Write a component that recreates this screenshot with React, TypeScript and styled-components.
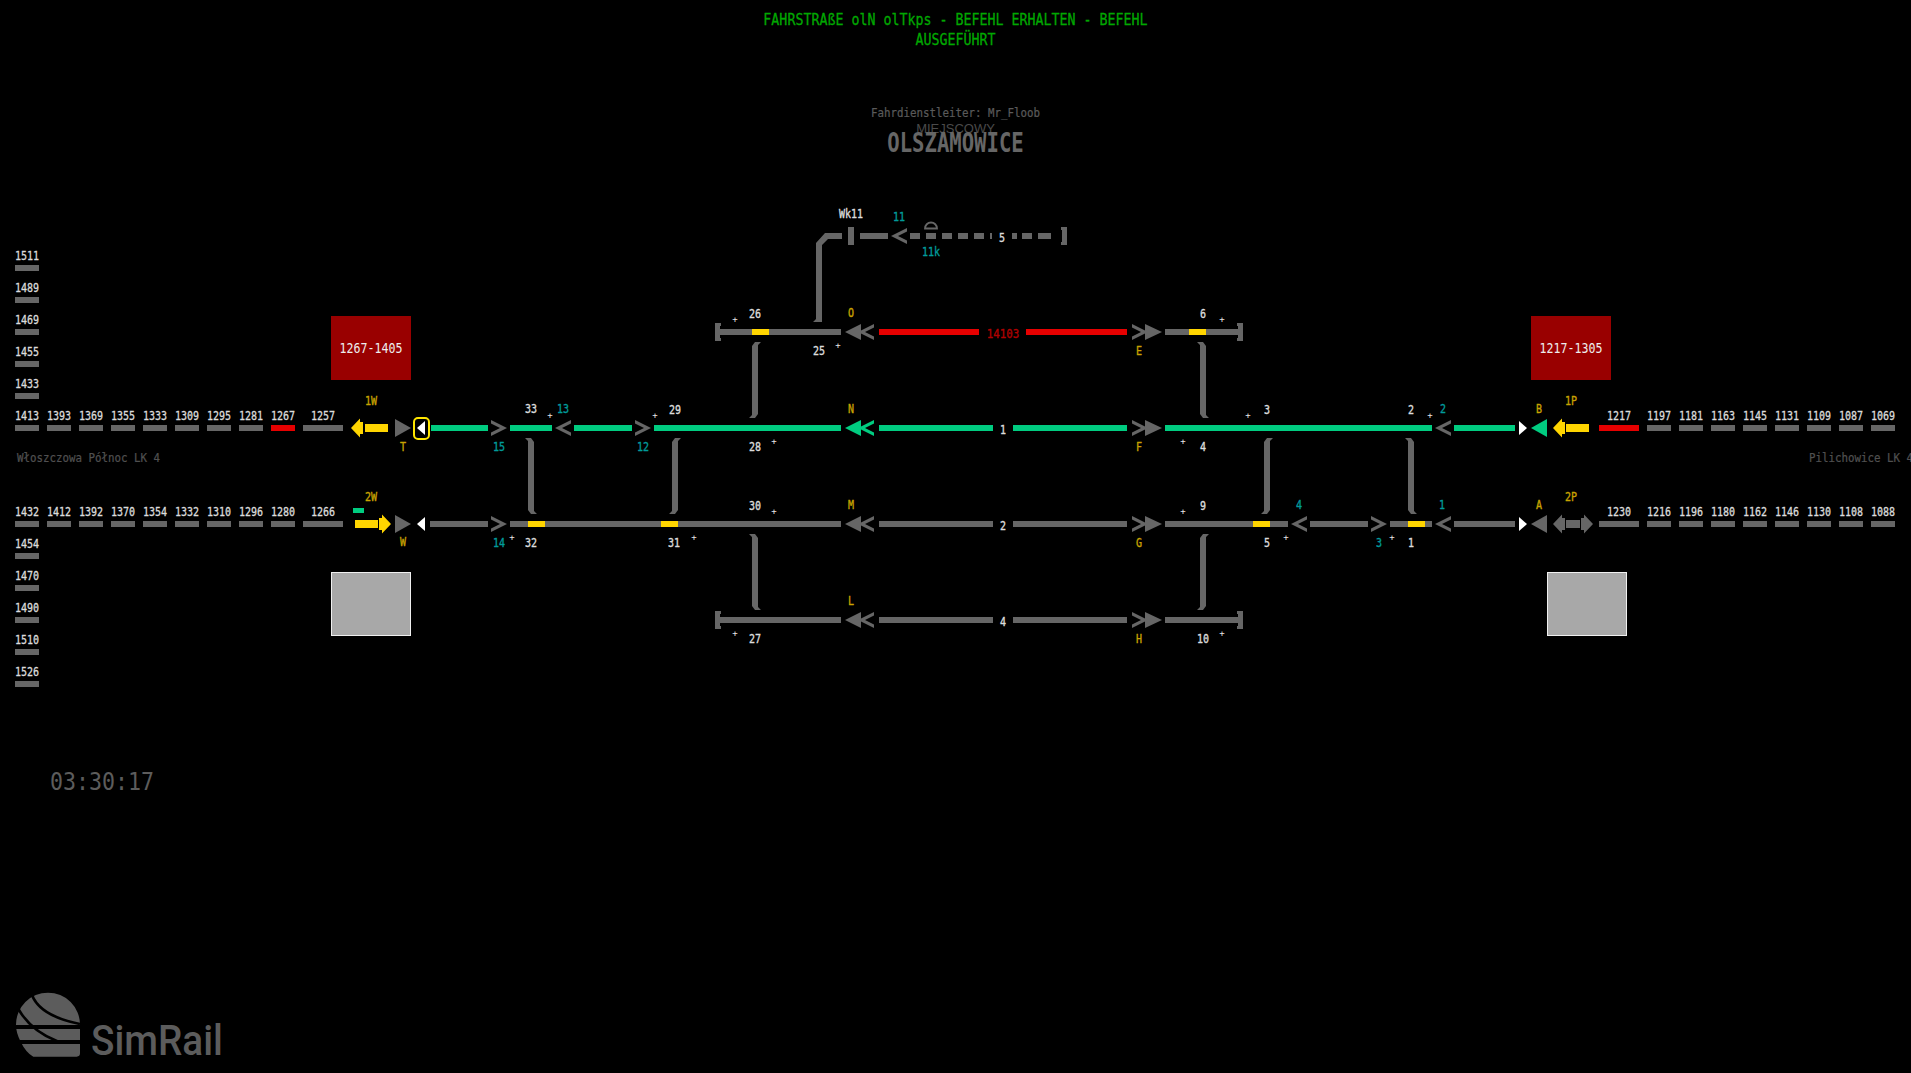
import React from 'react';
import styled, { createGlobalStyle } from 'styled-components';

const GRAY = '#666666';
const GREEN = '#00cc80';
const RED = '#e60000';
const YELLOW = '#ffd500';
const BOARD_TOP = 200;
const MONO = `'DejaVu Sans Mono', 'Liberation Mono', monospace`;

const GlobalStyle = createGlobalStyle`
    html, body {
        margin: 0;
        padding: 0;
        background: #000;
    }
`;

const Page = styled.div`
    position: relative;
    display: flex;
    flex-direction: column;
    width: 1911px;
    height: 1073px;
    overflow: hidden;
    background: #000;
    font-family: ${MONO};
`;

const Header = styled.header`
    display: flex;
    flex-direction: column;
    align-items: center;
    height: ${BOARD_TOP}px;
    padding-top: 13px;
    box-sizing: border-box;
`;

const Message = styled.div`
    width: 400px;
    font-size: 13.3px;
    line-height: 17.4px;
    text-align: center;
    color: #00a800;
    -webkit-text-stroke: 0.25px #00a800;
    transform: scaleY(1.15);
`;

const Dispatcher = styled.div`
    margin-top: 59px;
    font-size: 10.8px;
    line-height: 14px;
    color: #5a5a5a;
    -webkit-text-stroke: 0.2px #5a5a5a;
    transform: scaleY(1.15);
`;

const Mode = styled.div`
    margin-top: 0;
    font-family: 'Liberation Sans', Arial, sans-serif;
    font-size: 13px;
    line-height: 15px;
    color: #4a4a4a;
`;

const Station = styled.div`
    margin-top: -5px;
    font-size: 20.6px;
    font-weight: 700;
    line-height: 24px;
    color: ${GRAY};
    transform: scaleY(1.25);
`;

const Board = styled.main`
    position: relative;
    height: 500px;
    flex: none;
`;

const Plan = styled.svg`
    position: absolute;
    inset: 0;
    display: block;
`;

const LeftChain = styled.div`
    position: absolute;
    left: 15px;
    top: ${239 - BOARD_TOP}px;
    display: flex;
    flex-direction: column;
`;

const RightChain = styled.div`
    position: absolute;
    left: 1599px;
    top: ${399 - BOARD_TOP}px;
    display: flex;
    flex-direction: column;
`;

const ChainRow = styled.div`
    display: flex;
    gap: 8px;
`;

const LineGap = styled.div`
    height: 64px;
    display: flex;
    align-items: center;
    padding-bottom: 12px;
    box-sizing: border-box;
`;

const LineName = styled.span<{ $pad: number }>`
    padding-left: ${(p) => p.$pad}px;
    font-size: 10.8px;
    color: #505050;
    -webkit-text-stroke: 0.2px #505050;
    white-space: pre;
    transform: scaleY(1.15);
`;

const Cell = styled.div<{ $wide?: boolean }>`
    width: ${(p) => (p.$wide ? 40 : 24)}px;
    height: 32px;
    display: flex;
    flex-direction: column;
    justify-content: flex-end;
    align-items: center;
`;

const CellNumber = styled.span`
    height: 12px;
    margin-bottom: 3px;
    font-size: 10px;
    line-height: 12px;
    color: #dcdcdc;
    -webkit-text-stroke: 0.25px #dcdcdc;
    transform: scaleY(1.2);
`;

const CellBar = styled.span<{ $busy?: boolean }>`
    width: 100%;
    height: 6px;
    background: ${(p) => (p.$busy ? RED : GRAY)};
`;

const Tag = styled.span<{ $x: number; $y: number; $color: string; $size?: number }>`
    position: absolute;
    left: ${(p) => p.$x}px;
    top: ${(p) => p.$y - BOARD_TOP}px;
    font-size: ${(p) => p.$size ?? 10}px;
    line-height: 12px;
    color: ${(p) => p.$color};
    -webkit-text-stroke: 0.3px ${(p) => p.$color};
    white-space: pre;
    transform: translate(-50%, -50%) scaleY(1.2);
`;

const Plus = styled.span<{ $x: number; $y: number }>`
    position: absolute;
    left: ${(p) => p.$x}px;
    top: ${(p) => p.$y - BOARD_TOP}px;
    font-size: 9px;
    line-height: 10px;
    color: #e8e8e8;
    transform: translate(-50%, -50%);
`;

const Section = styled.div<{ $x: number; $y: number; $free?: boolean }>`
    position: absolute;
    left: ${(p) => p.$x}px;
    top: ${(p) => p.$y - BOARD_TOP}px;
    width: 80px;
    height: 64px;
    display: flex;
    align-items: center;
    justify-content: center;
    box-sizing: border-box;
    background: ${(p) => (p.$free ? '#a8a8a8' : '#990000')};
    border: ${(p) => (p.$free ? '1px solid #f0f0f0' : 'none')};
    color: #eeeeee;
    font-size: 11.6px;
`;

const SectionText = styled.span`
    transform: scaleY(1.2);
`;

const TrainMark = styled.div`
    position: absolute;
    left: 413px;
    top: ${417 - BOARD_TOP}px;
    width: 17px;
    height: 23px;
    box-sizing: border-box;
    border: 2px solid #ffe600;
    border-radius: 5px;
`;

const Footer = styled.footer`
    display: flex;
    flex-direction: column;
    flex: 1;
    padding-left: 16px;
`;

const Clock = styled.div`
    margin-top: 70px;
    padding-left: 34px;
    font-size: 21.6px;
    line-height: 24px;
    color: #5c5c5c;
    transform-origin: left center;
    transform: scaleY(1.15);
`;

const Brand = styled.div`
    margin-top: 198px;
    display: flex;
    align-items: flex-end;
    gap: 11px;
`;

const BrandName = styled.span`
    font-family: Roboto, 'Noto Sans', sans-serif;
    font-size: 43px;
    font-weight: 500;
    line-height: 33px;
    color: #5c5c5c;
    transform-origin: left bottom;
    transform: scaleX(0.9);
`;

type Span = [number, number, number, string];

const spans: Span[] = [
    // line 1 (top of the two main tracks)
    [431, 488, 428, GREEN],
    [510, 552, 428, GREEN],
    [574, 632, 428, GREEN],
    [654, 841, 428, GREEN],
    [879, 993, 428, GREEN],
    [1013, 1127, 428, GREEN],
    [1165, 1432, 428, GREEN],
    [1454, 1515, 428, GREEN],
    // line 2
    [430, 488, 524, GRAY],
    [510, 841, 524, GRAY],
    [528, 545, 524, YELLOW],
    [661, 678, 524, YELLOW],
    [879, 993, 524, GRAY],
    [1013, 1127, 524, GRAY],
    [1165, 1288, 524, GRAY],
    [1253, 1270, 524, YELLOW],
    [1310, 1368, 524, GRAY],
    [1390, 1432, 524, GRAY],
    [1408, 1425, 524, YELLOW],
    [1454, 1515, 524, GRAY],
    // siding over line 1
    [718, 841, 332, GRAY],
    [752, 769, 332, YELLOW],
    [879, 979, 332, RED],
    [1026, 1127, 332, RED],
    [1165, 1240, 332, GRAY],
    [1189, 1206, 332, YELLOW],
    // siding under line 2
    [718, 841, 620, GRAY],
    [879, 993, 620, GRAY],
    [1013, 1127, 620, GRAY],
    [1165, 1240, 620, GRAY],
    // track 5 with its lead
    [825, 842, 236, GRAY],
    [860, 888, 236, GRAY],
    [910, 920, 236, GRAY],
    [926, 936, 236, GRAY],
    [942, 952, 236, GRAY],
    [958, 968, 236, GRAY],
    [974, 984, 236, GRAY],
    [990, 992, 236, GRAY],
    [1012, 1017, 236, GRAY],
    [1022, 1032, 236, GRAY],
    [1038, 1051, 236, GRAY],
];

const Triangle = ({ x, y, dir, fill, half = 9, len = 16 }: { x: number; y: number; dir: 1 | -1; fill: string; half?: number; len?: number }) => {
    // x is the tip of the triangle, dir is where it points
    const base = x - dir * len;
    return <polygon points={`${x},${y} ${base},${y - half} ${base},${y + half}`} fill={fill} />;
};

const Chevron = ({ x, y, dir, fill = GRAY, len = 16 }: { x: number; y: number; dir: 1 | -1; fill?: string; len?: number }) => {
    const end = x - dir * len;
    const notch = x - dir * 7;
    return (
        <polygon
            points={`${x},${y} ${end},${y - 8} ${end},${y - 4.5} ${notch},${y} ${end},${y + 4.5} ${end},${y + 8}`}
            fill={fill}
        />
    );
};

const DoubleLeft = ({ y, fill = GRAY }: { y: number; fill?: string }) => (
    <>
        <Chevron x={858} y={y} dir={-1} fill={fill} />
        <Triangle x={845} y={y} dir={-1} fill={fill} half={8} />
    </>
);

const DoubleRight = ({ y }: { y: number }) => (
    <>
        <Chevron x={1148} y={y} dir={1} />
        <Triangle x={1162} y={y} dir={1} fill={GRAY} half={8} len={17} />
    </>
);

const BlockArrow = ({ tip, shoulder, y, dir, fill }: { tip: number; shoulder: number; y: number; dir: 1 | -1; fill: string }) => (
    <polygon
        points={`${tip},${y} ${tip - dir * 9},${y - 9.5} ${tip - dir * 9},${y - 6} ${shoulder},${y - 6} ${shoulder},${y + 6} ${tip - dir * 9},${y + 6} ${tip - dir * 9},${y + 9.5}`}
        fill={fill}
    />
);

// Switch link between two tracks, with a small foot at each end
const Link = ({ x, top, bottom, topDir, bottomDir }: { x: number; top: number; bottom: number; topDir: 1 | -1; bottomDir: 1 | -1 }) => {
    const r = x + 6;
    const topFoot = topDir === 1 ? `${x},${top + 4} ${x + 3},${top} ${x + 9},${top} ${r},${top + 3}` : `${x},${top + 3} ${x - 3},${top} ${x + 3},${top} ${r},${top + 4}`;
    const botFoot = bottomDir === 1 ? `${r},${bottom - 3} ${x + 9},${bottom} ${x + 3},${bottom} ${x},${bottom - 4}` : `${r},${bottom - 4} ${x + 3},${bottom} ${x - 3},${bottom} ${x},${bottom - 3}`;
    return <polygon points={`${topFoot} ${botFoot}`} fill={GRAY} />;
};

// Buffer stop drawn like a square bracket, open towards the track
const Stop = ({ x, y, dir }: { x: number; y: number; dir: 1 | -1 }) => {
    const back = dir === 1 ? x : x + 1;
    const tip = dir === 1 ? x + 6 : x;
    return (
        <>
            <rect x={back} y={y - 9} width={5} height={18} fill={GRAY} />
            <rect x={Math.min(tip, back)} y={y - 9} width={6} height={3} fill={GRAY} />
            <rect x={Math.min(tip, back)} y={y + 6} width={6} height={3} fill={GRAY} />
        </>
    );
};

const TrackPlan = () => (
    <Plan width={1911} height={500} viewBox={`0 ${BOARD_TOP} 1911 500`}>
        {spans.map(([from, to, y, color], i) => (
            <rect key={i} x={from} y={y - 3} width={to - from} height={6} fill={color} />
        ))}

        {/* west end */}
        <BlockArrow tip={351} shoulder={363} y={428} dir={-1} fill={YELLOW} />
        <rect x={365} y={424} width={23} height={8} fill={YELLOW} />
        <Triangle x={411} y={428} dir={1} fill={GRAY} />
        <Triangle x={417} y={428} dir={-1} fill="#fff" half={7} len={8} />
        <rect x={353} y={508} width={11} height={5} fill={GREEN} />
        <rect x={355} y={520} width={23} height={8} fill={YELLOW} />
        <BlockArrow tip={391} shoulder={379} y={524} dir={1} fill={YELLOW} />
        <Triangle x={411} y={524} dir={1} fill={GRAY} />
        <Triangle x={417} y={524} dir={-1} fill="#fff" half={7} len={8} />

        {/* signals along the two main tracks */}
        <Chevron x={507} y={428} dir={1} />
        <Chevron x={507} y={524} dir={1} />
        <Chevron x={555} y={428} dir={-1} />
        <Chevron x={651} y={428} dir={1} />
        <Chevron x={891} y={236} dir={-1} />
        <DoubleLeft y={332} />
        <DoubleLeft y={428} fill={GREEN} />
        <DoubleLeft y={524} />
        <DoubleLeft y={620} />
        <DoubleRight y={332} />
        <DoubleRight y={428} />
        <DoubleRight y={524} />
        <DoubleRight y={620} />
        <Chevron x={1435} y={428} dir={-1} />
        <Chevron x={1291} y={524} dir={-1} />
        <Chevron x={1387} y={524} dir={1} />
        <Chevron x={1435} y={524} dir={-1} />

        {/* east end */}
        <Triangle x={1527} y={428} dir={1} fill="#fff" half={7} len={8} />
        <Triangle x={1531} y={428} dir={-1} fill={GREEN} />
        <BlockArrow tip={1553} shoulder={1565} y={428} dir={-1} fill={YELLOW} />
        <rect x={1566} y={424} width={23} height={8} fill={YELLOW} />
        <Triangle x={1527} y={524} dir={1} fill="#fff" half={7} len={8} />
        <Triangle x={1531} y={524} dir={-1} fill={GRAY} />
        <BlockArrow tip={1553} shoulder={1565} y={524} dir={-1} fill={GRAY} />
        <rect x={1566} y={520} width={14} height={8} fill={GRAY} />
        <BlockArrow tip={1593} shoulder={1581} y={524} dir={1} fill={GRAY} />

        {/* switch links */}
        <Link x={528} top={438} bottom={514} topDir={-1} bottomDir={1} />
        <Link x={672} top={438} bottom={514} topDir={1} bottomDir={-1} />
        <Link x={752} top={342} bottom={418} topDir={1} bottomDir={-1} />
        <Link x={752} top={534} bottom={610} topDir={-1} bottomDir={1} />
        <Link x={1200} top={342} bottom={418} topDir={-1} bottomDir={1} />
        <Link x={1264} top={438} bottom={514} topDir={1} bottomDir={-1} />
        <Link x={1408} top={438} bottom={514} topDir={-1} bottomDir={1} />
        <Link x={1200} top={534} bottom={610} topDir={1} bottomDir={-1} />

        {/* lead up to track 5 */}
        <polygon
            points={`825,233 842,233 842,239 828,239 822,245 822,322 813,322 816,319 816,243`}
            fill={GRAY}
        />
        <rect x={848} y={227} width={6} height={18} fill={GRAY} />
        <Stop x={715} y={332} dir={1} />
        <Stop x={715} y={620} dir={1} />
        <Stop x={1237} y={332} dir={-1} />
        <Stop x={1237} y={620} dir={-1} />
        <Stop x={1061} y={236} dir={-1} />

        {/* derailer on track 5 */}
        <path d="M925 228.5 a6 6 0 0 1 12 0 Z" fill="none" stroke={GRAY} strokeWidth={1.8} />
    </Plan>
);

const SimRailMark = () => (
    <svg width={64} height={65} viewBox="48 97 192 193">
        <path
            d="M48 194 A96 96 0 0 1 240 194 L240 280 Q240 290 230 290 L100 290 Q78 278 62 245 Q48 218 48 194 Z"
            fill="#5c5c5c"
        />
        <path d="M48 201 H240" stroke="#000" strokeWidth={12} />
        <path d="M60 246 H240" stroke="#000" strokeWidth={12} />
        <path d="M96 105 Q120 168 240 192" stroke="#000" strokeWidth={8} fill="none" />
        <path d="M56 148 Q92 212 172 244" stroke="#000" strokeWidth={8} fill="none" />
    </svg>
);

const chainCells = (items: string[]) =>
    items.map((item) => {
        const wide = item.includes('w');
        const busy = item.includes('r');
        return (
            <Cell key={item} $wide={wide}>
                <CellNumber>{item.replace(/[wr]/g, '')}</CellNumber>
                <CellBar $busy={busy} />
            </Cell>
        );
    });

const whiteTags: [string, number, number][] = [
    ['33', 531, 409],
    ['29', 675, 410],
    ['28', 755, 447],
    ['30', 755, 506],
    ['32', 531, 543],
    ['31', 674, 543],
    ['27', 755, 639],
    ['26', 755, 314],
    ['25', 819, 351],
    ['6', 1203, 314],
    ['3', 1267, 410],
    ['2', 1411, 410],
    ['4', 1203, 447],
    ['9', 1203, 506],
    ['5', 1267, 543],
    ['1', 1411, 543],
    ['10', 1203, 639],
    ['Wk11', 851, 214],
    ['5', 1002, 238],
    ['1', 1003, 430],
    ['2', 1003, 526],
    ['4', 1003, 622],
];

const tealTags: [string, number, number][] = [
    ['13', 563, 409],
    ['15', 499, 447],
    ['12', 643, 447],
    ['14', 499, 543],
    ['11', 899, 217],
    ['11k', 931, 252],
    ['2', 1443, 409],
    ['4', 1299, 505],
    ['1', 1442, 505],
    ['3', 1379, 543],
];

const yellowTags: [string, number, number][] = [
    ['1W', 371, 401],
    ['2W', 371, 497],
    ['T', 403, 447],
    ['W', 403, 542],
    ['N', 851, 409],
    ['M', 851, 505],
    ['L', 851, 601],
    ['O', 851, 313],
    ['E', 1139, 351],
    ['F', 1139, 447],
    ['G', 1139, 543],
    ['H', 1139, 639],
    ['B', 1539, 409],
    ['A', 1539, 505],
    ['1P', 1571, 401],
    ['2P', 1571, 497],
];

const pluses: [number, number][] = [
    [550, 415], [655, 415], [774, 441], [512, 537], [694, 537], [774, 511], [735, 633],
    [735, 319], [838, 345], [1222, 319], [1248, 415], [1430, 415], [1183, 441], [1183, 511],
    [1286, 537], [1392, 537], [1222, 633],
];

export default function App(): React.JSX.Element {
    return (
        <Page>
            <GlobalStyle />
            <Header>
                <Message>FAHRSTRAßE olN olTkps - BEFEHL ERHALTEN - BEFEHL AUSGEFÜHRT</Message>
                <Dispatcher>Fahrdienstleiter: Mr_Floob</Dispatcher>
                <Mode>MIEJSCOWY</Mode>
                <Station>OLSZAMOWICE</Station>
            </Header>

            <Board>
                <TrackPlan />

                <LeftChain>
                    {chainCells(['1511', '1489', '1469', '1455', '1433'])}
                    <ChainRow>
                        {chainCells(['1413', '1393', '1369', '1355', '1333', '1309', '1295', '1281', 'r1267', 'w1257'])}
                    </ChainRow>
                    <LineGap>
                        <LineName $pad={2}>Włoszczowa Północ LK 4</LineName>
                    </LineGap>
                    <ChainRow>
                        {chainCells(['1432', '1412', '1392', '1370', '1354', '1332', '1310', '1296', '1280', 'w1266'])}
                    </ChainRow>
                    {chainCells(['1454', '1470', '1490', '1510', '1526'])}
                </LeftChain>

                <RightChain>
                    <ChainRow>
                        {chainCells(['rw1217', '1197', '1181', '1163', '1145', '1131', '1109', '1087', '1069'])}
                    </ChainRow>
                    <LineGap>
                        <LineName $pad={210}>Pilichowice LK 4</LineName>
                    </LineGap>
                    <ChainRow>
                        {chainCells(['w1230', '1216', '1196', '1180', '1162', '1146', '1130', '1108', '1088'])}
                    </ChainRow>
                </RightChain>

                <Section $x={331} $y={316}>
                    <SectionText>1267-1405</SectionText>
                </Section>
                <Section $x={1531} $y={316}>
                    <SectionText>1217-1305</SectionText>
                </Section>
                <Section $x={331} $y={572} $free />
                <Section $x={1547} $y={572} $free />
                <TrainMark />

                {whiteTags.map(([text, x, y], i) => (
                    <Tag key={i} $x={x} $y={y} $color="#dcdcdc">
                        {text}
                    </Tag>
                ))}
                {tealTags.map(([text, x, y], i) => (
                    <Tag key={i} $x={x} $y={y} $color="#009a9a">
                        {text}
                    </Tag>
                ))}
                {yellowTags.map(([text, x, y], i) => (
                    <Tag key={i} $x={x} $y={y} $color="#c8a200">
                        {text}
                    </Tag>
                ))}
                {pluses.map(([x, y], i) => (
                    <Plus key={i} $x={x} $y={y}>
                        +
                    </Plus>
                ))}
                <Tag $x={1003} $y={334} $color="#b00000" $size={10.8}>
                    14103
                </Tag>
            </Board>

            <Footer>
                <Clock>03:30:17</Clock>
                <Brand>
                    <SimRailMark />
                    <BrandName>SimRail</BrandName>
                </Brand>
            </Footer>
        </Page>
    );
}
